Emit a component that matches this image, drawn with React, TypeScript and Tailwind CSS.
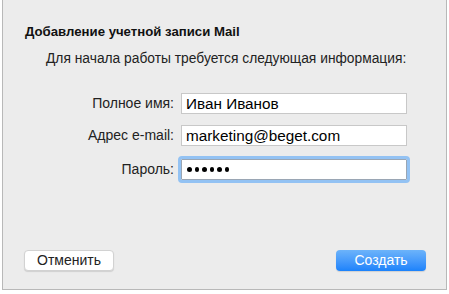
import React from "react";

export default function App() {
  return (
    <div
      className="w-[449px] h-[294px] bg-white"
      style={{ fontFamily: '"Liberation Sans", Arial, sans-serif' }}
    >
      <div className="ml-[2px] w-[445px] h-[290px] bg-[#ececec] border-l border-r border-b border-[#b8b8b8] flex flex-col">
        <div className="pl-[22px] pt-[24px] text-[13.2px] font-bold text-[#111] leading-[16px]">
          Добавление учетной записи Mail
        </div>
        <div className="pl-[43px] pt-[10px] text-[13.8px] text-[#222] leading-[18px]">
          Для начала работы требуется следующая информация:
        </div>
        <div className="mt-[25px] flex flex-col gap-[11px]">
          <Row label="Полное имя:" value="Иван Иванов" />
          <Row label="Адрес e-mail:" value="marketing@beget.com" />
          <div className="mt-[2px]">
            <Row label="Пароль:" value="" focused password />
          </div>
        </div>
        <div className="mt-auto mb-[18px] flex justify-between pl-[21px] pr-[20px]">
          <button className="w-[90px] h-[21px] bg-white rounded-[4px] border border-[#d2d2d2] shadow-[0_1px_1px_rgba(0,0,0,0.12)] text-[14px] text-[#222] leading-[19px]">
            Отменить
          </button>
          <button className="w-[90px] h-[21px] rounded-[4px] bg-gradient-to-b from-[#6cb3fa] to-[#1a82fb] text-[14px] text-white leading-[21px] shadow-[0_1px_1px_rgba(0,0,0,0.12)]">
            Создать
          </button>
        </div>
      </div>
    </div>
  );
}

function Row({
  label,
  value,
  focused,
  password,
}: {
  label: string;
  value: string;
  focused?: boolean;
  password?: boolean;
}) {
  return (
    <div className="flex items-center">
      <div className="w-[178px] text-right pr-[7px] text-[14px] text-[#222]">{label}</div>
      <div
        className={
          focused
            ? "w-[226px] h-[21px] bg-white border border-[#9aa6b4] outline outline-[3px] outline-[#93c2f3] rounded-[1px] flex items-center pl-[5px]"
            : "w-[226px] h-[21px] bg-white border border-[#c8c8c8] flex items-center pl-[4px]"
        }
      >
        {password ? (
          <div className="flex gap-[3px]">
            {[0, 1, 2, 3, 4, 5].map((i) => (
              <span key={i} className="w-[4.5px] h-[4.5px] rounded-full bg-black" />
            ))}
          </div>
        ) : (
          <span className="text-[15.3px] text-black leading-[19px]">{value}</span>
        )}
      </div>
    </div>
  );
}
